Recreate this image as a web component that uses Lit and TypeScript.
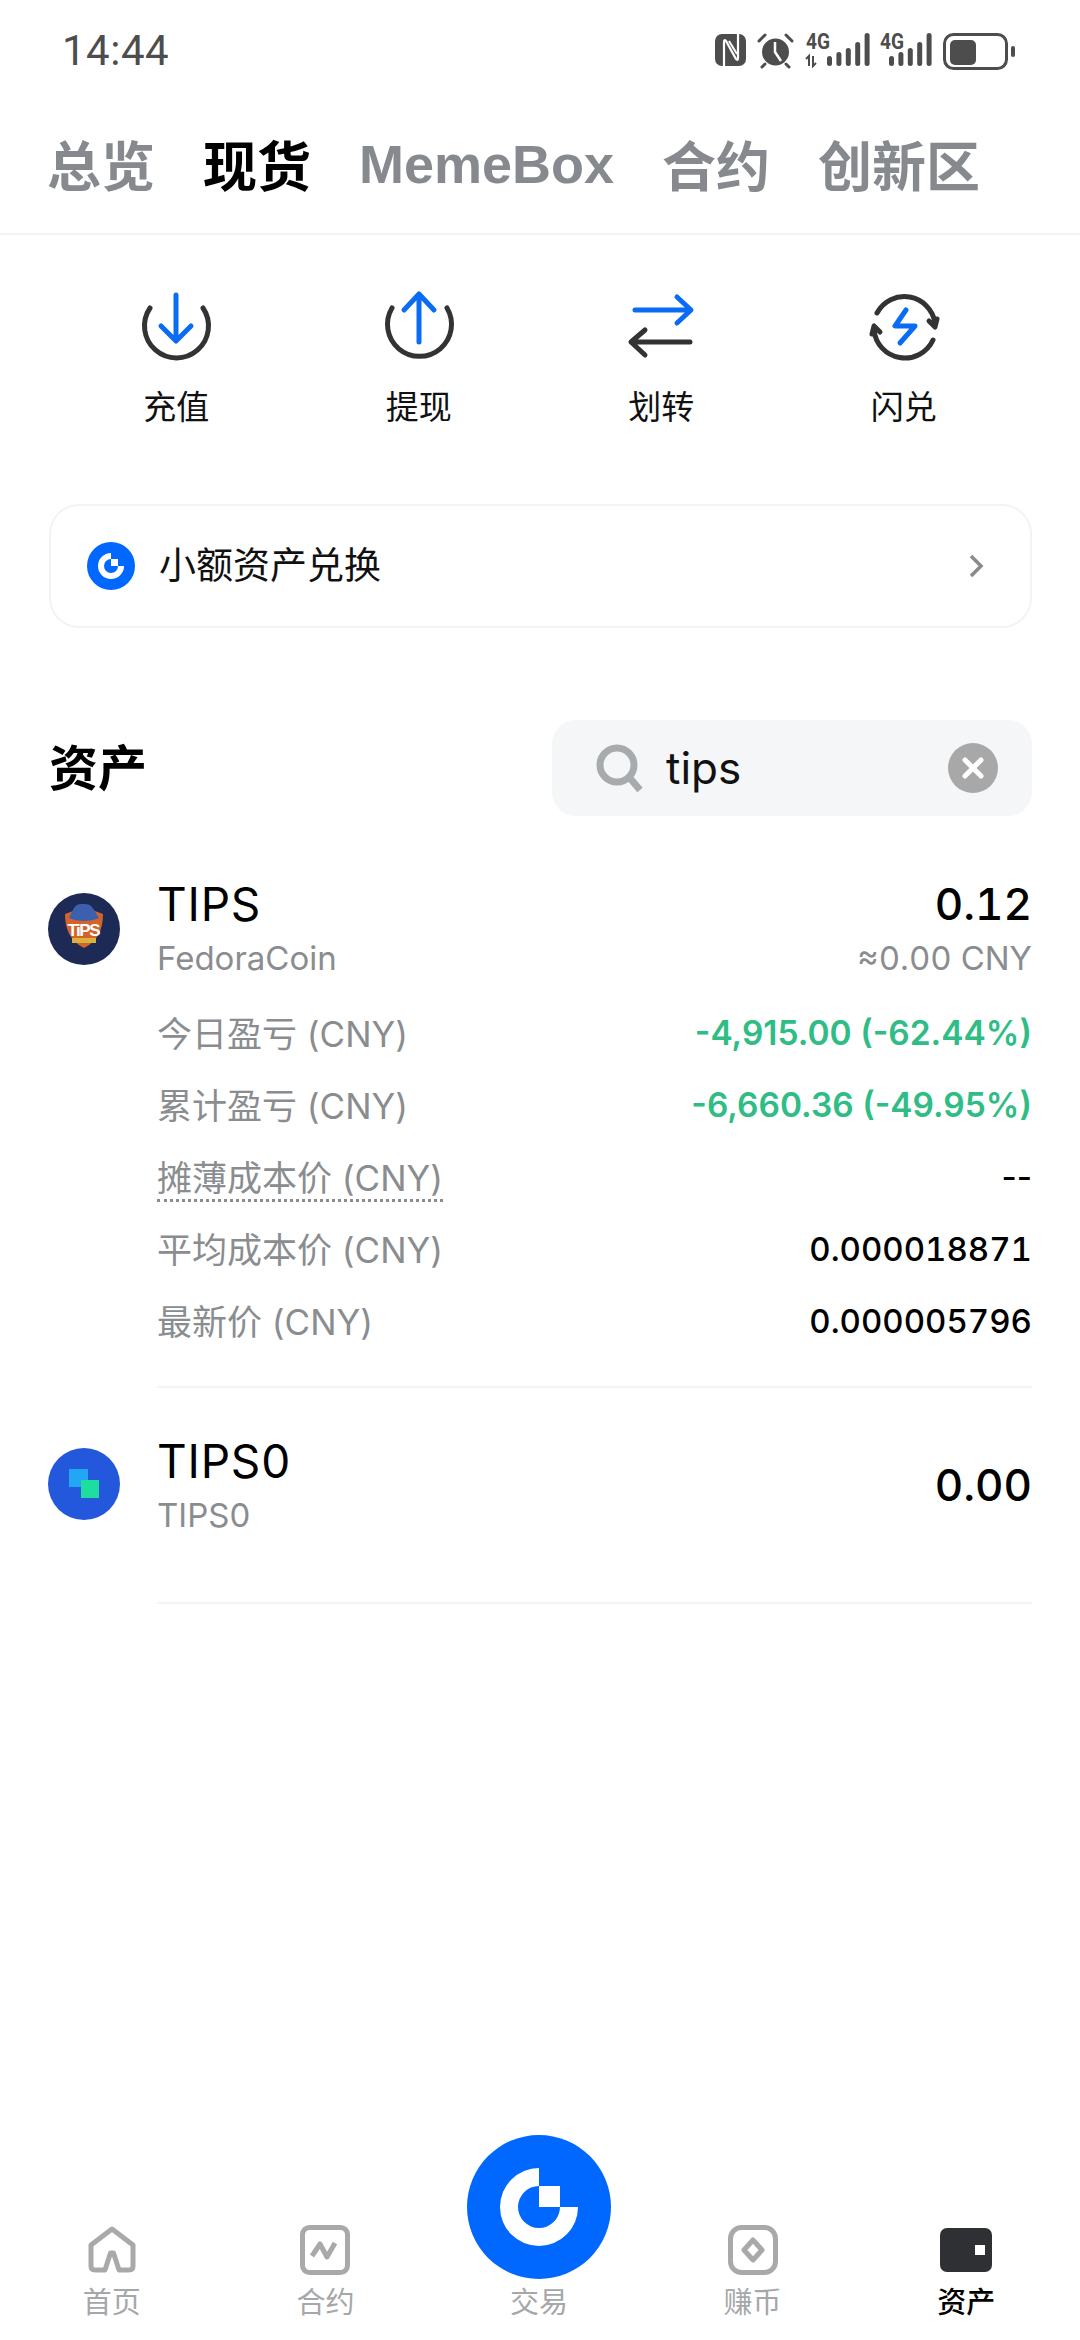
import { LitElement, html, css, svg } from 'lit';
import { customElement } from 'lit/decorators.js';

const tabs = ['总览', '现货', 'MemeBox', '合约', '创新区'];

const logoPaths = svg`
  <path d="M72 33A39 39 0 1 0 111 72H93A21 21 0 1 1 72 51Z" fill="#fff" />
  <rect x="72" y="51" width="21" height="21" fill="#fff" />
`;

const actions = [
  {
    label: '充值',
    icon: svg`
      <path class="dk" d="M14 23A32 32 0 1 0 67 23" />
      <path class="bl" d="M40 10V55M25 41L40 56L55 41" />`,
  },
  {
    label: '提现',
    icon: svg`
      <path class="dk" d="M13 23A32 32 0 1 0 68 23" />
      <path class="bl" d="M40 57V10M25 25L40 9L55 25" />`,
  },
  {
    label: '划转',
    icon: svg`
      <path class="bl" d="M14 25H69M56 12L70 25L56 38" />
      <path class="dk" d="M69 57H11M24 45L10 57L24 70" />`,
  },
  {
    label: '闪兑',
    icon: svg`
      <path class="dk" d="M13 28A31 31 0 0 1 71 38M65 36L71 42L73 34" />
      <path class="dk" d="M69 55A31 31 0 0 1 10 45M16 47L10 41L8 49" />
      <path class="bl" d="M42 25L31 41H51L36 58" />`,
  },
];

const details = [
  { label: '今日盈亏 (CNY)', value: '-4,915.00 (-62.44%)', kind: 'up' },
  { label: '累计盈亏 (CNY)', value: '-6,660.36 (-49.95%)', kind: 'up' },
  { label: '摊薄成本价 (CNY)', value: '--', kind: 'dash', dotted: true },
  { label: '平均成本价 (CNY)', value: '0.000018871', kind: 'plain' },
  { label: '最新价 (CNY)', value: '0.000005796', kind: 'plain' },
];

const navItems = [
  {
    label: '首页',
    icon: html`<svg width="48" height="48" viewBox="0 0 48 48"><path class="nav-line" d="M24 3L45 19V40Q45 44 41 44H31L25.500 27H22.500L17 44H7Q3 44 3 40V19Z" /></svg>`,
  },
  {
    label: '合约',
    icon: html`<svg width="50" height="50" viewBox="0 0 50 50"><rect class="nav-line" x="2.500" y="2.500" width="45" height="45" rx="7" /><path class="nav-line" d="M12 31L20 19L27 32L35 18" /></svg>`,
  },
  { label: '交易', center: true },
  {
    label: '赚币',
    icon: html`<svg width="50" height="50" viewBox="0 0 50 50"><rect class="nav-line" x="2.500" y="2.500" width="45" height="45" rx="11" /><path class="nav-line" d="M25 15L34 25L25 35L16 25Z" /></svg>`,
  },
  {
    label: '资产',
    active: true,
    icon: html`<svg width="52" height="44" viewBox="0 0 52 44"><rect width="52" height="44" rx="7" fill="#2f3033" /><rect x="35" y="17" width="10" height="10" fill="#fff" /></svg>`,
  },
];

@customElement('app-root')
export class AppRoot extends LitElement {
  static styles = css`
    :host {
      display: flex;
      flex-direction: column;
      min-height: 2340px;
      background: #fff;
      color: #000;
      font-family: Inter, 'Noto Sans CJK SC', sans-serif;
    }

    .status {
      display: flex;
      align-items: center;
      justify-content: space-between;
      height: 100px;
      padding: 0 65px 0 62px;
      box-sizing: border-box;
    }
    .time {
      font-family: Roboto, sans-serif;
      font-size: 42px;
      color: #4d4d4d;
      letter-spacing: 0.5px;
    }
    .status-icons {
      display: flex;
      align-items: center;
      margin-top: 1px;
    }
    .status-icons svg {
      display: block;
    }

    .tabs {
      display: flex;
      align-items: center;
      gap: 48px;
      height: 135px;
      padding: 0 0 6px 47px;
      box-sizing: border-box;
      border-bottom: 2px solid #f3f4f5;
      font-family: 'Liberation Sans', 'Noto Sans CJK SC', sans-serif;
      font-size: 54px;
      font-weight: 700;
      color: #868a8e;
    }
    .tabs .active {
      color: #000;
    }

    .actions {
      display: grid;
      grid-template-columns: repeat(4, 1fr);
      padding: 50px 55px 0;
    }
    .action {
      display: flex;
      flex-direction: column;
      align-items: center;
      gap: 20px;
      font-size: 33px;
      line-height: 44px;
      color: #111;
    }
    .action svg {
      display: block;
    }
    .dk,
    .bl {
      fill: none;
      stroke-width: 5;
      stroke-linecap: round;
      stroke-linejoin: round;
    }
    .dk {
      stroke: #333;
    }
    .bl {
      stroke: #0a6cf5;
    }

    .banner {
      display: flex;
      align-items: center;
      height: 124px;
      margin: 75px 48px 0 49px;
      padding: 0 46px 0 36px;
      box-sizing: border-box;
      border: 2px solid #f2f3f4;
      border-radius: 30px;
      font-size: 37px;
      color: #111;
    }
    .banner .name {
      flex: 1;
      margin: 0 0 6px 24px;
    }

    .head {
      display: flex;
      align-items: center;
      justify-content: space-between;
      margin: 92px 48px 0 49px;
    }
    .head h2 {
      margin: 0 0 8px;
      font-size: 49px;
      font-weight: 700;
    }
    .search {
      display: flex;
      align-items: center;
      width: 480px;
      height: 96px;
      padding: 0 34px 0 44px;
      box-sizing: border-box;
      border-radius: 24px;
      background: #f4f6f8;
    }
    .search .query {
      flex: 1;
      margin-left: 22px;
      font-size: 44px;
      color: #111;
    }

    .coin {
      margin-top: 62px;
      padding: 0 48px 0 48px;
      display: grid;
      grid-template-columns: 72px 1fr;
      column-gap: 37px;
    }
    .coin + .coin {
      margin-top: 0;
      padding-top: 47px;
    }
    .coin-icon {
      align-self: center;
      display: block;
    }
    .coin-main {
      display: flex;
      align-items: center;
      justify-content: space-between;
    }
    .sym {
      font-size: 46px;
      line-height: 52px;
      letter-spacing: 0.8px;
    }
    .sub {
      margin-top: 6px;
      font-size: 33px;
      line-height: 44px;
      color: #8a8d90;
    }
    .amount {
      text-align: right;
      font-size: 44px;
      line-height: 52px;
      font-weight: 500;
      font-variant-numeric: tabular-nums;
    }
    .amount .sub {
      font-weight: 400;
    }
    .details {
      grid-column: 2;
      margin-top: 15px;
      padding-bottom: 31px;
    }
    .row {
      display: flex;
      align-items: center;
      justify-content: space-between;
      height: 72px;
      font-size: 35px;
      color: #8a8d90;
    }
    .row .dotted {
      border-bottom: 3px dotted #8a8d90;
      line-height: 42px;
      margin-top: 8px;
    }
    .row .up {
      margin-top: 3px;
      font-size: 33.500px;
      color: #2fbd85;
      font-weight: 600;
    }
    .row .plain,
    .row .dash {
      margin-top: 3px;
      color: #000;
      font-size: 33px;
      font-weight: 500;
    }
    .row .plain {
      font-variant-numeric: tabular-nums;
    }
    .rule {
      grid-column: 2;
      height: 2px;
      background: #f3f4f5;
    }
    .coin.last .coin-main {
      padding-bottom: 65px;
    }
    .coin.last .coin-icon {
      align-self: start;
      margin-top: 13px;
    }
    .coin.last .amount {
      margin-bottom: 3px;
    }

    nav {
      display: grid;
      grid-template-columns: repeat(5, 1fr);
      align-items: end;
      margin-top: auto;
      padding: 0 7px 19px 5px;
    }
    .nav-item {
      display: flex;
      flex-direction: column;
      align-items: center;
      gap: 9px;
      font-size: 29px;
      line-height: 36px;
      color: #a5a7a9;
    }
    .nav-item.active {
      color: #000;
      font-weight: 500;
    }
    .nav-item.center {
      gap: 6px;
    }
    .nav-icon {
      display: flex;
      align-items: center;
      justify-content: center;
      height: 52px;
    }
    .nav-line {
      fill: none;
      stroke: #a9a9a9;
      stroke-width: 5;
      stroke-linejoin: round;
    }
    .center-btn {
      display: block;
    }
  `;

  private statusIcons() {
    const bars = (x: number) =>
      [0, 1, 2, 3, 4].map(
        (i) =>
          svg`<rect x=${x + i * 9.4} y=${[23, 19, 15, 9, 0][i]} width="5" height=${[10, 14, 18, 24, 33][i]} rx="2.5" fill="#4d4d4d" />`,
      );
    return html`
      <svg width="300" height="44" viewBox="0 -4 300 44">
        <rect x="0" y="1" width="31" height="32" rx="7" fill="#4d4d4d" />
        <path d="M9 33V9Q9 6 11 8L21 26Q23 28 23 25V1" fill="none" stroke="#fff" stroke-width="2.200" />
        <path d="M14 8L22 21" fill="none" stroke="#fff" stroke-width="2" />
        <circle cx="60.500" cy="19" r="13.500" fill="#4d4d4d" />
        <path d="M60 9V19L66 28" fill="none" stroke="#fff" stroke-width="2.500" />
        <path d="M44 8L50 2M77 8L71 2M50 31L47 34M71 31L74 34" stroke="#4d4d4d" stroke-width="3" stroke-linecap="round" />
        <text x="91" y="16" font-family="Roboto, sans-serif" font-size="22" font-weight="700" fill="#4d4d4d" textLength="24" lengthAdjust="spacingAndGlyphs">4G</text>
        <path d="M94 33V23L91 26M98 23V33L101 30" fill="none" stroke="#4d4d4d" stroke-width="2" />
        ${bars(112)}
        <text x="165" y="16" font-family="Roboto, sans-serif" font-size="22" font-weight="700" fill="#4d4d4d" textLength="24" lengthAdjust="spacingAndGlyphs">4G</text>
        ${bars(174)}
        <rect x="229.500" y="1.500" width="62" height="34" rx="9" fill="none" stroke="#4d4d4d" stroke-width="3" />
        <rect x="235" y="7" width="26" height="25" rx="5" fill="#4d4d4d" />
        <rect x="296" y="13" width="4" height="11" rx="2" fill="#4d4d4d" />
      </svg>
    `;
  }

  private tipsLogo() {
    return html`
      <svg class="coin-icon" width="72" height="72" viewBox="0 0 72 72">
        <circle cx="36" cy="36" r="36" fill="#1d2a55" />
        <path d="M17 21L28 17H44L55 21C55 36 50 48 36 55C22 48 17 36 17 21Z" fill="#d2642b" />
        <path d="M21 25C24 19 26 11 33 11C37 11 41 11 43 13C47 17 48 21 51 25C42 29 30 29 21 25Z" fill="#3c5fae" />
        <text x="36" y="43" text-anchor="middle" font-family="'Liberation Sans', sans-serif" font-size="17" font-weight="700" fill="#fff" textLength="33">TiPS</text>
        <rect x="24" y="45" width="24" height="5" fill="#d8b23a" />
      </svg>
    `;
  }

  private tips0Logo() {
    return html`
      <svg class="coin-icon" width="72" height="72" viewBox="0 0 72 72">
        <circle cx="36" cy="36" r="36" fill="#2458dc" />
        <rect x="21" y="21" width="19" height="18" fill="#22a7f5" />
        <rect x="33" y="32" width="18" height="18" fill="#1fdc9f" />
      </svg>
    `;
  }

  render() {
    return html`
      <div class="status">
        <span class="time">14:44</span>
        <div class="status-icons">${this.statusIcons()}</div>
      </div>

      <div class="tabs">
        ${tabs.map((t) => html`<span class=${t === '现货' ? 'active' : ''}>${t}</span>`)}
      </div>

      <div class="actions">
        ${actions.map(
          (a) => html`
            <div class="action">
              <svg width="80" height="80" viewBox="0 0 80 80">${a.icon}</svg>
              <span>${a.label}</span>
            </div>
          `,
        )}
      </div>

      <div class="banner">
        <svg width="48" height="48" viewBox="0 0 144 144">
          <circle cx="72" cy="72" r="72" fill="#0068ff" />
          ${logoPaths}
        </svg>
        <span class="name">小额资产兑换</span>
        <svg width="16" height="24" viewBox="0 0 16 24">
          <path d="M3 2L13 12L3 22" fill="none" stroke="#8a8a8a" stroke-width="3.500" />
        </svg>
      </div>

      <div class="head">
        <h2>资产</h2>
        <div class="search">
          <svg width="48" height="48" viewBox="0 0 48 48">
            <circle cx="21" cy="21" r="17" fill="none" stroke="#a8abae" stroke-width="7" />
            <path d="M33 33L44 46" fill="none" stroke="#a8abae" stroke-width="7" />
          </svg>
          <span class="query">tips</span>
          <svg width="50" height="50" viewBox="0 0 50 50">
            <circle cx="25" cy="25" r="25" fill="#a8a8a8" />
            <path d="M17 17L33 33M33 17L17 33" stroke="#fff" stroke-width="5" stroke-linecap="round" />
          </svg>
        </div>
      </div>

      <div class="coin">
        ${this.tipsLogo()}
        <div class="coin-main">
          <div>
            <div class="sym">TIPS</div>
            <div class="sub">FedoraCoin</div>
          </div>
          <div class="amount">
            <div>0.12</div>
            <div class="sub">≈0.00 CNY</div>
          </div>
        </div>
        <div class="details">
          ${details.map(
            (d) => html`
              <div class="row">
                <span class=${d.dotted ? 'dotted' : ''}>${d.label}</span>
                <span class=${d.kind}>${d.value}</span>
              </div>
            `,
          )}
        </div>
        <div class="rule"></div>
      </div>

      <div class="coin last">
        ${this.tips0Logo()}
        <div class="coin-main">
          <div>
            <div class="sym">TIPS0</div>
            <div class="sub">TIPS0</div>
          </div>
          <div class="amount">0.00</div>
        </div>
        <div class="rule"></div>
      </div>

      <nav>
        ${navItems.map((n) =>
          n.center
            ? html`
                <div class="nav-item center">
                  <svg class="center-btn" width="144" height="144" viewBox="0 0 144 144">
                    <circle cx="72" cy="72" r="72" fill="#0068ff" />
                    ${logoPaths}
                  </svg>
                  <span>${n.label}</span>
                </div>
              `
            : html`
                <div class="nav-item ${n.active ? 'active' : ''}">
                  <div class="nav-icon">${n.icon}</div>
                  <span>${n.label}</span>
                </div>
              `,
        )}
      </nav>
    `;
  }
}
